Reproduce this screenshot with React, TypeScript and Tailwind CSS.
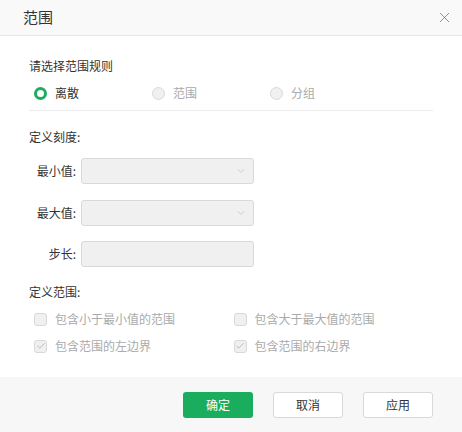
import { ChevronDown, Check, X } from "lucide-react";

const font = { fontFamily: '"Noto Sans CJK SC", "Noto Sans", sans-serif' };

const Radio = ({ label, checked }: { label: string; checked?: boolean }) => (
  <div className="flex items-center w-[118px]">
    {checked ? (
      <span className="w-[13px] h-[13px] rounded-full border-[3.5px] border-[#1aad5e] bg-white" />
    ) : (
      <span className="w-[13px] h-[13px] rounded-full border border-[#d9d9d9] bg-[#f0f0f0]" />
    )}
    <span className={"ml-[8px] text-[12px] " + (checked ? "text-[#333]" : "text-[#aaa]")}>
      {label}
    </span>
  </div>
);

const Field = ({ label, select }: { label: string; select?: boolean }) => (
  <div className="flex items-center h-[26px]">
    <span className="w-[52px] pr-[5px] text-right text-[12px] text-[#333]">{label}</span>
    <div className="flex-none w-[173px] h-[26px] rounded-[3px] border border-[#d9d9d9] bg-[#f0f0f0] flex items-center justify-end pr-[6px]">
      {select && <ChevronDown size={12} strokeWidth={1} className="text-[#aaa]" />}
    </div>
  </div>
);

const Box = ({ label, checked }: { label: string; checked?: boolean }) => (
  <div className="flex items-center h-[18px] w-[201px]">
    <span className="w-[13px] h-[13px] rounded-[3px] border border-[#d9d9d9] bg-[#f0f0f0] flex items-center justify-center">
      {checked && <Check size={10} strokeWidth={1.5} className="text-[#999]" />}
    </span>
    <span className="ml-[8px] text-[12px] leading-[18px] text-[#aaa]">{label}</span>
  </div>
);

export default function App() {
  return (
    <div className="w-[462px] h-[432px] bg-white flex flex-col" style={font}>
      <div className="h-[36px] flex-none bg-[#f9f9f9] border-b border-[#e8e8e8] flex items-center justify-between pl-[23px] pr-[9px]">
        <span className="text-[15px] text-[#333]">范围</span>
        <X size={17} strokeWidth={1} className="text-[#666]" />
      </div>
      <div className="flex-1 px-[29px]">
        <div className="mt-[21px] text-[12px] text-[#333] leading-[18px]">请选择范围规则</div>
        <div className="mt-[9px] pl-[5px] flex">
          <Radio label="离散" checked />
          <Radio label="范围" />
          <Radio label="分组" />
        </div>
        <div className="mt-[8px] h-px bg-[#ececec]" />
        <div className="mt-[17px] text-[12px] text-[#333] leading-[18px]">定义刻度:</div>
        <div className="mt-[12px] flex flex-col">
          <Field label="最小值:" select />
          <div className="mt-[16px]">
            <Field label="最大值:" select />
          </div>
          <div className="mt-[15px]">
            <Field label="步长:" />
          </div>
        </div>
        <div className="mt-[16px] text-[12px] text-[#333] leading-[18px]">定义范围:</div>
        <div className="mt-[9px] pl-[5px] flex flex-col gap-[9px]">
          <div className="flex">
            <Box label="包含小于最小值的范围" />
            <Box label="包含大于最大值的范围" />
          </div>
          <div className="flex">
            <Box label="包含范围的左边界" checked />
            <Box label="包含范围的右边界" checked />
          </div>
        </div>
      </div>
      <div className="h-[55px] flex-none bg-[#f7f7f7] flex items-center justify-end gap-[20px] pr-[29px]">
        <button className="w-[70px] h-[26px] rounded-[3px] bg-[#1aad5e] text-white text-[12px]">确定</button>
        <button className="w-[70px] h-[26px] rounded-[3px] bg-white border border-[#d9d9d9] text-[#333] text-[12px]">取消</button>
        <button className="w-[70px] h-[26px] rounded-[3px] bg-white border border-[#d9d9d9] text-[#333] text-[12px]">应用</button>
      </div>
    </div>
  );
}
